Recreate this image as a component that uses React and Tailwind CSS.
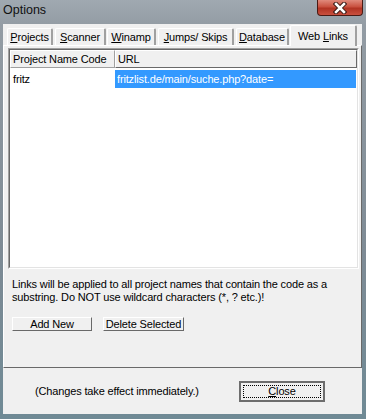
import React from "react";

const font = { fontFamily: '"Liberation Sans", Arial, sans-serif' };

const Tab = ({ label, hot, w, ml, active }) => {
  const i = label.indexOf(hot);
  const text = (
    <span className="whitespace-pre">
      {label.slice(0, i)}
      <span className="underline underline-offset-[1px]">{hot}</span>
      {label.slice(i + 1)}
    </span>
  );
  if (active) {
    return (
      <div
        className={`relative z-10 -mb-px h-[21px] ${w} ${ml} flex items-start justify-center pt-[2px] bg-[#f0f0f0] border-t border-l border-white border-r-2 border-r-[#a0a0a0] rounded-t-[2px]`}
      >
        {text}
      </div>
    );
  }
  return (
    <div
      className={`h-[17px] ${w} ${ml} flex items-center justify-center bg-[#f0f0f0] border-t border-l border-white border-r-2 border-r-[#a0a0a0] rounded-t-[2px]`}
    >
      {text}
    </div>
  );
};

const Btn = ({ children, w }) => (
  <button
    className={`${w} h-[14px] border border-t-white border-l-white border-r-[#696969] border-b-[#696969] bg-[#f0f0f0] flex items-center justify-center leading-none text-[11px] tracking-[-0.15px] text-black`}
  >
    {children}
  </button>
);

export default function App() {
  return (
    <div
      style={font}
      className="w-[366px] h-[419px] flex flex-col bg-[linear-gradient(180deg,#a0a9b1_0%,#939ca4_6%,#7e8b95_60%,#6f8a95_100%)] text-[11px] tracking-[-0.15px] text-black"
    >
      {/* title bar */}
      <div className="h-[24px] flex items-start">
        <div className="pl-[3px] pt-[4px] text-[12.5px] tracking-normal leading-none text-[#111]">Options</div>
        <div className="ml-auto mr-[3px] w-[46px] h-[16px] rounded-b-[4px] border border-t-0 border-[#4a1a14] bg-[linear-gradient(180deg,#e08a7c_0%,#c9503f_45%,#b13323_55%,#c9503f_100%)] flex items-center justify-center">
          <svg width="14" height="12" viewBox="0 0 14 12">
            <path d="M3 2 L11 10 M11 2 L3 10" stroke="#3a1a16" strokeWidth="4.5" strokeLinecap="square" />
            <path d="M3 2 L11 10 M11 2 L3 10" stroke="#ffffff" strokeWidth="2.5" strokeLinecap="square" />
          </svg>
        </div>
      </div>

      {/* client area */}
      <div className="flex-1 ml-[3px] mr-[4px] mb-[5px] bg-[#f0f0f0] flex flex-col">
        {/* tab strip */}
        <div className="h-[21px] flex items-end">
          <Tab label="Projects" hot="P" w="w-[46px]" ml="ml-[4px]" />
          <Tab label="Scanner" hot="S" w="w-[51px]" ml="ml-[2px]" />
          <Tab label="Winamp" hot="W" w="w-[49px]" ml="ml-[1px]" />
          <Tab label="Jumps/ Skips" hot="J" w="w-[76px]" ml="ml-[2px]" />
          <Tab label="Database" hot="D" w="w-[53px]" ml="ml-[2px]" />
          <Tab label="Web Links" hot="L" w="w-[67px]" ml="ml-[1px]" active />
        </div>

        {/* tab panel */}
        <div className="h-[323px] border-t border-l border-white border-r border-b border-r-[#696969] border-b-[#696969] flex flex-col pl-[4px] pr-[2px] pt-[2px]">
          <div className="h-[221px] border border-t-[#a0a0a0] border-l-[#a0a0a0] border-r-white border-b-white">
            <div className="h-full border border-t-[#696969] border-l-[#696969] border-r-[#e3e3e3] border-b-[#e3e3e3] bg-white flex flex-col">
              <div className="h-[18px] flex">
                <div className="w-[105px] h-full bg-[#f0f0f0] border-r border-b border-r-[#a0a0a0] border-b-[#a0a0a0] border-t border-l border-t-white border-l-white pl-[2px] flex items-center">
                  Project Name Code
                </div>
                <div className="flex-1 h-full bg-[#f0f0f0] border-r border-b border-r-[#696969] border-b-[#696969] border-t border-l border-t-white border-l-white pl-[2px] flex items-center">
                  URL
                </div>
              </div>
              <div className="h-[18px] mt-[2px] flex">
                <div className="w-[105px] pl-[3px] flex items-center">fritz</div>
                <div className="flex-1 mr-[1px] bg-[#3399ff] text-white pl-[2px] flex items-center">
                  fritzlist.de/main/suche.php?date=
                </div>
              </div>
            </div>
          </div>

          <div className="mt-[9px] pl-[4px] leading-[13px]">
            Links will be applied to all project names that contain the code as a
            <br />
            substring. Do NOT use wildcard characters (*, ? etc.)!
          </div>

          <div className="mt-[13px] pl-[4px] flex gap-[11px]">
            <Btn w="w-[80px]">Add New</Btn>
            <Btn w="w-[81px]">Delete Selected</Btn>
          </div>
        </div>

        {/* bottom */}
        <div className="flex-1 flex items-center">
          <div className="ml-[32px] pt-[1px]">(Changes take effect immediately.)</div>
          <div className="ml-auto mr-[37px] w-[86px] h-[21px] border-2 border-[#6d6d6d] bg-[#f0f0f0] p-[2px]">
            <div className="h-full border border-dotted border-black flex items-center justify-center leading-none">
              <span className="underline underline-offset-[1px]">C</span>lose
            </div>
          </div>
        </div>
      </div>
    </div>
  );
}
